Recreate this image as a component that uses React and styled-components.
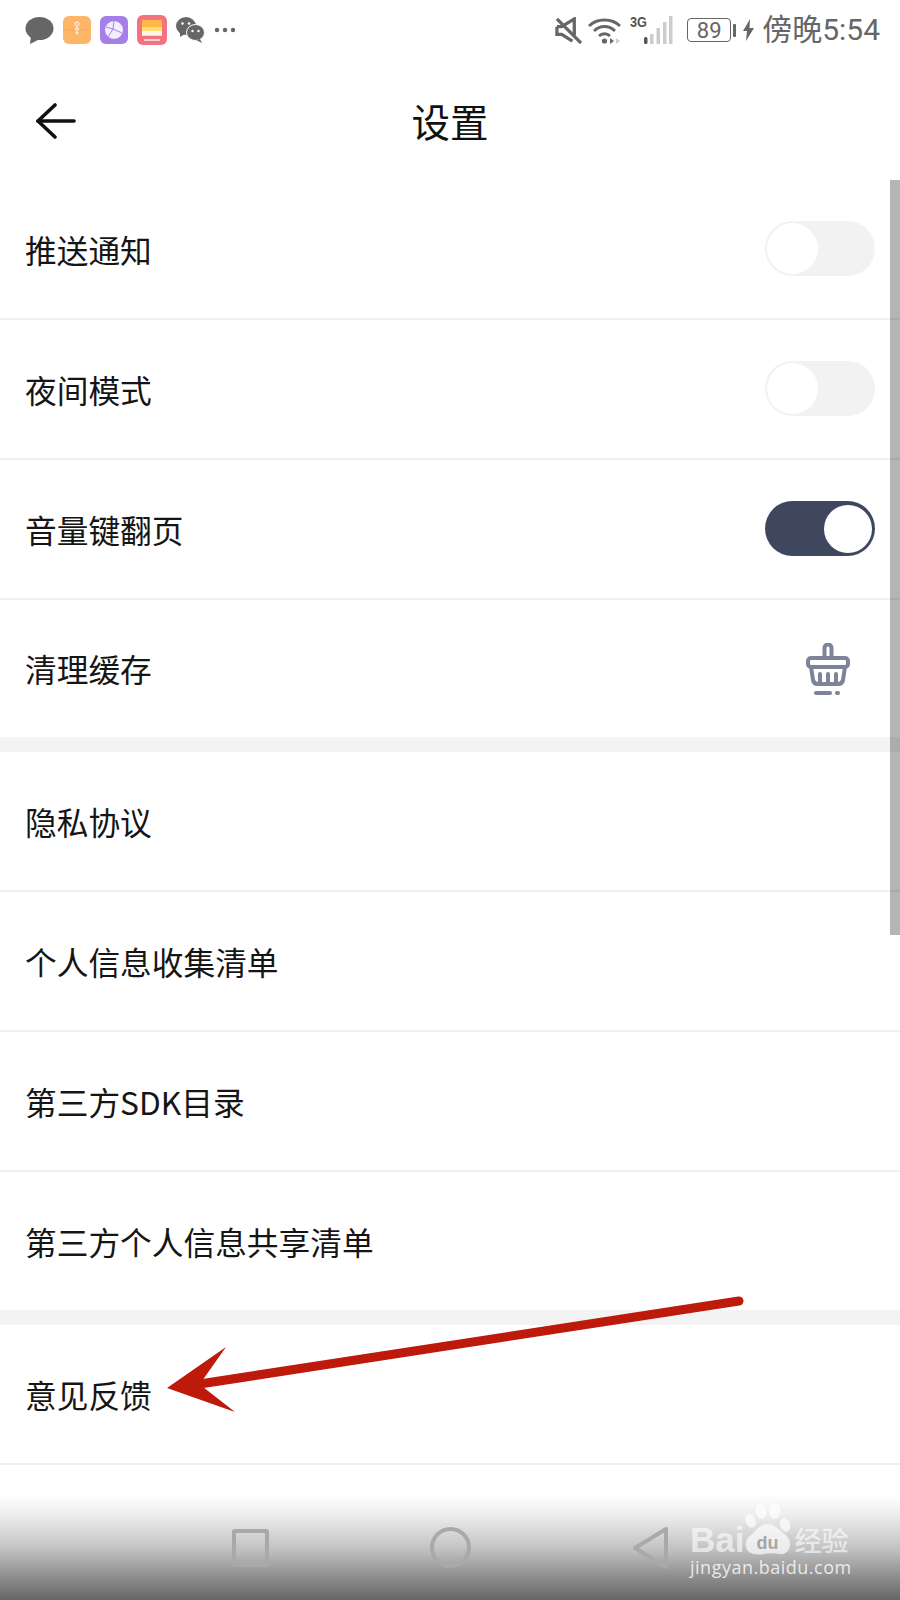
import styled, { createGlobalStyle } from "styled-components";

const GlobalStyle = createGlobalStyle`
    html, body {
        margin: 0;
        padding: 0;
        background: #fff;
    }
    * {
        box-sizing: border-box;
    }
`;

const groups = [
    [
        { label: "推送通知", control: "off" },
        { label: "夜间模式", control: "off" },
        { label: "音量键翻页", control: "on" },
        { label: "清理缓存", control: "clean", flushHeight: 137 },
    ],
    [
        { label: "隐私协议" },
        { label: "个人信息收集清单" },
        { label: "第三方SDK目录" },
        { label: "第三方个人信息共享清单", flushHeight: 138 },
    ],
    [{ label: "意见反馈" }],
];

function BubbleIcon() {
    return (
        <svg width="29" height="29" viewBox="0 0 29 29">
            <ellipse cx="14.5" cy="12.5" rx="14" ry="11.5" fill="#666" />
            <path d="M6 20 L5 28 L15 23 Z" fill="#666" />
        </svg>
    );
}

function OrangeAppIcon() {
    return (
        <svg width="28" height="28" viewBox="0 0 28 28">
            <rect width="28" height="28" rx="6" fill="#fdb568" />
            <path d="M0 14 H28" stroke="#f6a65a" strokeWidth="0.6" />
            <circle cx="14" cy="8" r="2" fill="none" stroke="#fff" strokeWidth="1" />
            <circle cx="14" cy="13" r="1.4" fill="none" stroke="#fff" strokeWidth="1" />
            <circle cx="14" cy="17" r="1.4" fill="#fff" opacity="0.8" />
        </svg>
    );
}

function PurpleAppIcon() {
    return (
        <svg width="28" height="28" viewBox="0 0 28 28">
            <rect width="28" height="28" rx="6" fill="#a57fe8" />
            <circle cx="14" cy="14" r="9" fill="#f3edfd" />
            <path d="M14 5 L13 13 L22 17 M13 13 L8 21 M13 13 L6 11" fill="none" stroke="#a57fe8" strokeWidth="1" />
        </svg>
    );
}

function WalletAppIcon() {
    return (
        <svg width="30" height="30" viewBox="0 0 30 30">
            <rect width="30" height="30" rx="6" fill="#f2727f" />
            <rect x="5" y="5" width="20" height="7" fill="#fdb845" />
            <rect x="5" y="12" width="20" height="4" fill="#fedc72" />
            <rect x="5" y="16" width="20" height="4" fill="#fff6e4" />
            <rect x="5" y="20" width="20" height="1" fill="#fbd4d4" />
            <rect x="7" y="24" width="16" height="2" rx="1" fill="#fbd4d4" />
        </svg>
    );
}

function WechatIcon() {
    return (
        <svg width="29" height="26" viewBox="0 0 29 26">
            <ellipse cx="10" cy="9" rx="10" ry="9" fill="#666" />
            <path d="M4 15 L4 20 L9 17 Z" fill="#666" />
            <ellipse cx="19.5" cy="15.5" rx="9" ry="8" fill="#666" stroke="#fff" strokeWidth="1" />
            <path d="M24 22 L26 26 L20 23 Z" fill="#666" />
            <circle cx="6.5" cy="6.5" r="1.3" fill="#fff" />
            <circle cx="13" cy="6.5" r="1.3" fill="#fff" />
            <circle cx="16.5" cy="14" r="1.2" fill="#fff" />
            <circle cx="22.5" cy="14" r="1.2" fill="#fff" />
        </svg>
    );
}

function MoreDots() {
    return (
        <svg width="22" height="6" viewBox="0 0 22 6">
            <circle cx="3" cy="3" r="2.2" fill="#666" />
            <circle cx="11" cy="3" r="2.2" fill="#666" />
            <circle cx="19" cy="3" r="2.2" fill="#666" />
        </svg>
    );
}

function MuteIcon() {
    return (
        <MuteSvg width="27" height="27" viewBox="0 0 28 28" fill="none" stroke="#666" strokeWidth="3.4">
            <path d="M2 10 H7 L20 2 V19" />
            <path d="M2 10 V18 H7 L18 25" />
            <path d="M2 2 L27 27" />
        </MuteSvg>
    );
}

function WifiIcon() {
    return (
        <svg width="33" height="27" viewBox="0 0 33 27" fill="none" stroke="#666" strokeWidth="2.8">
            <path d="M1 9 C9 1 24 1 32 9" />
            <path d="M6 14 C12 8 21 8 27 14" />
            <path d="M11 19 C14 16 19 16 22 19" />
            <circle cx="16.5" cy="24" r="2.6" fill="#666" stroke="none" />
            <path d="M22 21 L26 24 L22 27 Z" fill="#666" stroke="none" />
            <path d="M28 21 L32 24 L28 27 Z" fill="#ccc" stroke="none" />
        </svg>
    );
}

function SignalIcon() {
    return (
        <svg width="29" height="28" viewBox="0 0 29 28">
            <rect x="0" y="21" width="3.5" height="7" rx="1.5" fill="#555" />
            <rect x="6" y="18" width="3.5" height="10" fill="#ccc" />
            <rect x="12.5" y="12" width="3.5" height="16" fill="#ccc" />
            <rect x="19" y="6" width="3.5" height="22" fill="#ccc" />
            <rect x="25" y="0" width="3.5" height="28" fill="#ccc" />
        </svg>
    );
}

function BoltIcon() {
    return (
        <svg width="11" height="22" viewBox="0 0 11 22">
            <path d="M7 0 L0 12 H4 L3 22 L11 9 H6.5 Z" fill="#666" />
        </svg>
    );
}

function BackArrow() {
    return (
        <svg width="40" height="36" viewBox="0 0 40 36" fill="none" stroke="#111" strokeWidth="3.6" strokeLinecap="round" strokeLinejoin="round">
            <path d="M19 2 L2 18 L19 34" />
            <path d="M2 18 H38" />
        </svg>
    );
}

function BasketIcon() {
    return (
        <svg width="44" height="52" viewBox="0 0 44 52" fill="none" stroke="#7d8398" strokeWidth="4" strokeLinecap="round" strokeLinejoin="round">
            <path d="M18.5 15 V5 a3.5 3.5 0 0 1 7 0 V15" />
            <rect x="2" y="15" width="40" height="9" rx="3" />
            <path d="M5 24 L7 37 a5 5 0 0 0 5 4 H32 a5 5 0 0 0 5 -4 L39 24" />
            <path d="M14 31 V40 M22 31 V40 M30 31 V40" />
            <path d="M10 50 H24" />
            <path d="M31 50 H32" />
        </svg>
    );
}

function PaperArrow() {
    return (
        <ArrowLayer width="900" height="1600" viewBox="0 0 900 1600">
            <path d="M203 1383.5 L739 1301" stroke="#bd1a0b" strokeWidth="9" strokeLinecap="round" fill="none" />
            <path d="M167 1388 L226 1347 L202 1381 L203 1387 L235 1412 Z" fill="#bd1a0b" />
        </ArrowLayer>
    );
}

function BaiduPaw() {
    return (
        <svg width="47" height="52" viewBox="0 0 47 52" fill="rgba(255,255,255,0.68)">
            <ellipse cx="6.5" cy="18" rx="5" ry="7" transform="rotate(-25 6.5 18)" />
            <ellipse cx="17" cy="8" rx="5.5" ry="8" transform="rotate(-8 17 8)" />
            <ellipse cx="31" cy="8" rx="5.5" ry="8" transform="rotate(8 31 8)" />
            <ellipse cx="41" cy="22" rx="5" ry="7" transform="rotate(-20 41 22)" />
            <path d="M23 21 C16 21 13 27 8 31 C1 36 0 43 4 48 C8 52 14 52 20 51 C25 50 30 50 36 51 C42 52 46 47 46 41 C46 34 40 31 36 27 C32 24 28 21 23 21 Z" />
        </svg>
    );
}

function SettingControl({ control }) {
    if (control === "clean") {
        return (
            <CleanSlot>
                <BasketIcon />
            </CleanSlot>
        );
    }
    if (control) {
        return (
            <Toggle $on={control === "on"}>
                <Knob $on={control === "on"} />
            </Toggle>
        );
    }
    return null;
}

export default function App() {
    return (
        <Screen>
            <GlobalStyle />
            <StatusBar>
                <StatusGroup>
                    <BubbleIcon />
                    <OrangeAppIcon />
                    <PurpleAppIcon />
                    <WalletAppIcon />
                    <WechatIcon />
                    <MoreDots />
                </StatusGroup>
                <StatusGroup>
                    <MuteIcon />
                    <WifiIcon />
                    <NetworkWrap>
                        <NetworkLabel>3G</NetworkLabel>
                        <SignalIcon />
                    </NetworkWrap>
                    <Battery>
                        <BatteryBody>89</BatteryBody>
                        <BatteryNub />
                    </Battery>
                    <BoltIcon />
                    <Clock>傍晚5:54</Clock>
                </StatusGroup>
            </StatusBar>

            <Header>
                <BackButton>
                    <BackArrow />
                </BackButton>
                <Title>设置</Title>
            </Header>

            {groups.map((group, groupIndex) => (
                <Group key={groupIndex} $last={groupIndex === groups.length - 1}>
                    {group.map((item) => (
                        <Row key={item.label} $flushHeight={item.flushHeight}>
                            <RowLabel>{item.label}</RowLabel>
                            <SettingControl control={item.control} />
                        </Row>
                    ))}
                </Group>
            ))}

            <Scrollbar />
            <NavBar>
                <SquareKey />
                <CircleKey />
                <svg width="38" height="44" viewBox="0 0 38 44" fill="none" stroke="#a9a9a9" strokeWidth="4" strokeLinejoin="round">
                    <path d="M34 3 V41 L3 22 Z" />
                </svg>
                <Watermark>
                    <LogoLine>
                        <LogoWord>Bai</LogoWord>
                        <PawWrap>
                            <BaiduPaw />
                            <PawText>du</PawText>
                        </PawWrap>
                        <LogoCn>经验</LogoCn>
                    </LogoLine>
                    <LogoUrl>jingyan.baidu.com</LogoUrl>
                </Watermark>
            </NavBar>
            <PaperArrow />
        </Screen>
    );
}

const Screen = styled.div`
    position: relative;
    width: 900px;
    height: 1600px;
    overflow: hidden;
    background: #fff;
    font-family: "Noto Sans CJK SC", "Liberation Sans", sans-serif;
    color: #151515;
`;

const StatusBar = styled.div`
    display: flex;
    justify-content: space-between;
    align-items: center;
    height: 60px;
    padding: 0 20px 0 25px;
`;

const StatusGroup = styled.div`
    display: flex;
    align-items: center;
    gap: 8px;

    &:first-child {
        gap: 9px;
    }
`;

const MuteSvg = styled.svg`
    margin-right: -2px;
`;

const NetworkWrap = styled.div`
    position: relative;
    width: 43px;
    height: 28px;
    margin-left: 1px;
    display: flex;
    justify-content: flex-end;
`;

const NetworkLabel = styled.span`
    position: absolute;
    left: 0;
    top: -3px;
    font-family: "Liberation Sans", sans-serif;
    font-size: 15px;
    line-height: 18px;
    font-weight: 700;
    color: #555;
    transform: scaleX(0.85);
    transform-origin: left center;
`;

const Battery = styled.div`
    display: flex;
    align-items: center;
    gap: 2px;
    margin-left: 6px;
    margin-right: -1px;
`;

const BatteryBody = styled.div`
    width: 44px;
    height: 24px;
    border: 1.5px solid #666;
    border-radius: 4px;
    display: flex;
    align-items: center;
    justify-content: center;
    font-family: "Roboto", sans-serif;
    font-size: 22px;
    color: #666;
`;

const BatteryNub = styled.div`
    width: 3px;
    height: 13px;
    border-radius: 1px;
    background: #666;
`;

const Clock = styled.span`
    font-family: "Roboto", "Noto Sans CJK SC", sans-serif;
    font-size: 30px;
    line-height: 36px;
    color: #666;
`;

const Header = styled.div`
    display: flex;
    align-items: center;
    justify-content: center;
    position: relative;
    height: 120px;
`;

const BackButton = styled.div`
    position: absolute;
    left: 36px;
    top: 43px;
    line-height: 0;
`;

const Title = styled.h1`
    margin: 0;
    font-size: 38.5px;
    font-weight: 400;
    color: #111;
`;

const Group = styled.div`
    border-bottom: ${(props) => (props.$last ? "0" : "15px solid #f3f3f3")};
`;

const Row = styled.div`
    display: flex;
    align-items: center;
    justify-content: space-between;
    height: ${(props) => props.$flushHeight || 140}px;
    padding: 0 25px;
    border-bottom: ${(props) => (props.$flushHeight ? "0" : "2px solid #f0f0f0")};
`;

const RowLabel = styled.span`
    font-size: 31.7px;
    line-height: 40px;
    margin-top: -1px;
    color: #151515;
`;

const Toggle = styled.div`
    display: flex;
    justify-content: ${(props) => (props.$on ? "flex-end" : "flex-start")};
    align-items: center;
    width: 110px;
    height: 55px;
    margin-top: -1px;
    padding: 2px;
    border-radius: 28px;
    background: ${(props) => (props.$on ? "#3e475e" : "#f2f2f2")};
`;

const Knob = styled.div`
    width: ${(props) => (props.$on ? 48 : 51)}px;
    height: ${(props) => (props.$on ? 48 : 51)}px;
    margin-right: ${(props) => (props.$on ? 1 : 0)}px;
    border-radius: 50%;
    background: #fff;
`;

const CleanSlot = styled.div`
    display: flex;
    justify-content: center;
    width: 94px;
    line-height: 0;
`;

const Scrollbar = styled.div`
    position: absolute;
    top: 180px;
    right: 0;
    width: 10px;
    height: 755px;
    background: rgba(0, 0, 0, 0.29);
`;

const NavBar = styled.div`
    position: absolute;
    left: 0;
    right: 0;
    bottom: 0;
    height: 105px;
    display: flex;
    align-items: center;
    justify-content: space-between;
    padding: 0 230px 0 232px;
    background: linear-gradient(to bottom, #ffffff 0%, #eeeeee 18%, #c4c4c4 50%, #8a8a8a 80%, #666666 100%);
`;

const SquareKey = styled.div`
    width: 37px;
    height: 38px;
    border: 4px solid #a9a9a9;
    border-radius: 3px;
`;

const CircleKey = styled.div`
    width: 41px;
    height: 41px;
    border: 4px solid #a9a9a9;
    border-radius: 50%;
`;

const Watermark = styled.div`
    position: absolute;
    left: 690px;
    top: 8px;
    color: rgba(255, 255, 255, 0.62);
`;

const LogoLine = styled.div`
    display: flex;
    align-items: flex-end;
    height: 52px;
`;

const LogoWord = styled.span`
    font-family: "Liberation Sans", sans-serif;
    font-size: 35px;
    line-height: 35px;
    font-weight: 700;
    margin-bottom: -2px;
`;

const PawWrap = styled.div`
    position: relative;
    width: 47px;
    height: 52px;
    line-height: 0;
`;

const PawText = styled.span`
    position: absolute;
    left: 12px;
    top: 30px;
    font-family: "Liberation Sans", sans-serif;
    font-size: 18px;
    line-height: 20px;
    font-weight: 700;
    color: #a6a6a6;
`;

const LogoCn = styled.span`
    font-size: 27px;
    line-height: 27px;
    font-weight: 500;
    margin-left: 3px;
    margin-bottom: 2px;
`;

const LogoUrl = styled.div`
    margin-top: 1px;
    font-family: "Open Sans", sans-serif;
    font-size: 18px;
    line-height: 22px;
    letter-spacing: 0.5px;
    color: rgba(255, 255, 255, 0.8);
`;

const ArrowLayer = styled.svg`
    position: absolute;
    top: 0;
    left: 0;
    pointer-events: none;
`;
